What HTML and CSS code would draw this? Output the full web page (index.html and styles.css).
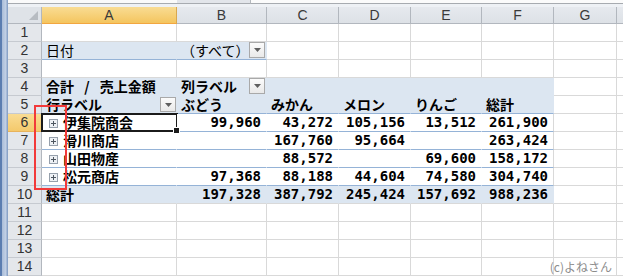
FILE: index.html
```html
<!DOCTYPE html>
<html lang="ja">
<head>
<meta charset="utf-8">
<title>ピボットテーブル</title>
<link rel="stylesheet" href="styles.css">
</head>
<body>
<div class="app">
  <div class="edge"></div>
  <div class="main">
    <div class="fbar">
      <div class="namebox"></div>
      <div class="fbtns"></div>
      <div class="finput"></div>
    </div>
    <div class="grid">
      <div class="corner"><span class="tri"></span></div>
      <div class="ch sel">A</div><div class="ch">B</div><div class="ch">C</div><div class="ch">D</div><div class="ch">E</div><div class="ch">F</div><div class="ch">G</div><div class="ch"></div>

      <div class="rh">1</div><div class="c"></div><div class="c"></div><div class="c"></div><div class="c"></div><div class="c"></div><div class="c"></div><div class="c"></div><div class="c"></div>

      <div class="rh">2</div>
      <div class="c pv bl">日付</div>
      <div class="c pv bl">（すべて）<span class="dd"><svg width="7" height="4" viewBox="0 0 7 4"><path d="M0 0H7L3.5 4Z" fill="#5f5f5f"/></svg></span></div>
      <div class="c"></div><div class="c"></div><div class="c"></div><div class="c"></div><div class="c"></div><div class="c"></div>

      <div class="rh">3</div><div class="c"></div><div class="c"></div><div class="c"></div><div class="c"></div><div class="c"></div><div class="c"></div><div class="c"></div><div class="c"></div>

      <div class="rh">4</div>
      <div class="c pv b ws">合計 / 売上金額</div>
      <div class="c pv b">列ラベル<span class="dd"><svg width="7" height="4" viewBox="0 0 7 4"><path d="M0 0H7L3.5 4Z" fill="#5f5f5f"/></svg></span></div>
      <div class="c pv"></div><div class="c pv"></div><div class="c pv"></div><div class="c pv"></div>
      <div class="c"></div><div class="c"></div>

      <div class="rh">5</div>
      <div class="c pv bl b">行ラベル<span class="dd dd-a"><svg width="7" height="4" viewBox="0 0 7 4"><path d="M0 0H7L3.5 4Z" fill="#5f5f5f"/></svg></span></div>
      <div class="c pv bl b">ぶどう</div>
      <div class="c pv bl b">みかん</div>
      <div class="c pv bl b">メロン</div>
      <div class="c pv bl b">りんご</div>
      <div class="c pv bl b">総計</div>
      <div class="c"></div><div class="c"></div>

      <div class="rh rsel">6</div>
      <div class="c wb b act"><span class="pm"><svg width="9" height="9" viewBox="0 0 9 9"><rect x="0.5" y="0.5" width="8" height="8" fill="#eef1f5" stroke="#96a0ac"/><path d="M2 4.5H7M4.5 2V7" stroke="#4d5660"/></svg></span>伊集院商会</div>
      <div class="c wb n">99,960</div>
      <div class="c wb n">43,272</div>
      <div class="c wb n">105,156</div>
      <div class="c wb n">13,512</div>
      <div class="c wb n fr">261,900</div>
      <div class="c"></div><div class="c"></div>

      <div class="rh">7</div>
      <div class="c wb b"><span class="pm"><svg width="9" height="9" viewBox="0 0 9 9"><rect x="0.5" y="0.5" width="8" height="8" fill="#eef1f5" stroke="#96a0ac"/><path d="M2 4.5H7M4.5 2V7" stroke="#4d5660"/></svg></span>滑川商店</div>
      <div class="c wb n"></div>
      <div class="c wb n">167,760</div>
      <div class="c wb n">95,664</div>
      <div class="c wb n"></div>
      <div class="c wb n fr">263,424</div>
      <div class="c"></div><div class="c"></div>

      <div class="rh">8</div>
      <div class="c wb b"><span class="pm"><svg width="9" height="9" viewBox="0 0 9 9"><rect x="0.5" y="0.5" width="8" height="8" fill="#eef1f5" stroke="#96a0ac"/><path d="M2 4.5H7M4.5 2V7" stroke="#4d5660"/></svg></span>山田物産</div>
      <div class="c wb n"></div>
      <div class="c wb n">88,572</div>
      <div class="c wb n"></div>
      <div class="c wb n">69,600</div>
      <div class="c wb n fr">158,172</div>
      <div class="c"></div><div class="c"></div>

      <div class="rh">9</div>
      <div class="c wb b"><span class="pm"><svg width="9" height="9" viewBox="0 0 9 9"><rect x="0.5" y="0.5" width="8" height="8" fill="#eef1f5" stroke="#96a0ac"/><path d="M2 4.5H7M4.5 2V7" stroke="#4d5660"/></svg></span>松元商店</div>
      <div class="c wb n">97,368</div>
      <div class="c wb n">88,188</div>
      <div class="c wb n">44,604</div>
      <div class="c wb n">74,580</div>
      <div class="c wb n fr">304,740</div>
      <div class="c"></div><div class="c"></div>

      <div class="rh">10</div>
      <div class="c pv tot b">総計</div>
      <div class="c pv tot n">197,328</div>
      <div class="c pv tot n">387,792</div>
      <div class="c pv tot n">245,424</div>
      <div class="c pv tot n">157,692</div>
      <div class="c pv tot n">988,236</div>
      <div class="c"></div><div class="c"></div>

      <div class="rh">11</div><div class="c"></div><div class="c"></div><div class="c"></div><div class="c"></div><div class="c"></div><div class="c"></div><div class="c"></div><div class="c"></div>
      <div class="rh">12</div><div class="c"></div><div class="c"></div><div class="c"></div><div class="c"></div><div class="c"></div><div class="c"></div><div class="c"></div><div class="c"></div>
      <div class="rh">13</div><div class="c"></div><div class="c"></div><div class="c"></div><div class="c"></div><div class="c"></div><div class="c"></div><div class="c"></div><div class="c"></div>
      <div class="rh">14</div><div class="c"></div><div class="c"></div><div class="c"></div><div class="c"></div><div class="c"></div><div class="c"></div><div class="c wm">(c)よねさん</div><div class="c"></div>
    </div>
  </div>
  <div class="mark"></div>
</div>
</body>
</html>
```

FILE: styles.css
```css
* { box-sizing: border-box; }
html, body {
  margin: 0;
  padding: 0;
  width: 623px;
  height: 276px;
  overflow: hidden;
  background: #fff;
}
.app {
  position: relative;
  display: flex;
  width: 623px;
  height: 276px;
  font-family: "Noto Sans CJK JP", "Liberation Sans", sans-serif;
  color: #000;
}
.edge {
  flex: 0 0 8px;
  background: linear-gradient(90deg, #5b7db0 0, #5b7db0 2px, #a9bcd8 2px, #c3d1e6 6px, #8aa3c8 7px, #8aa3c8 8px);
}
.main {
  flex: 1;
  display: flex;
  flex-direction: column;
  min-width: 0;
}
.fbar {
  height: 7px;
  display: flex;
  border-bottom: 3px solid #eef1f5;
  background: #fff;
}
.namebox { width: 169px; background: #fafafa; border-bottom: 1px solid #a7abb0; }
.fbtns { width: 73px; background: #e2e5ea; border-bottom: 1px solid #a7abb0; }
.finput { flex: 1; background: #fbfbfb; border-bottom: 1px solid #a7abb0; border-left: 1px solid #b5b9be; }

.grid {
  display: grid;
  grid-template-columns: 34px 135px 90px 72px 72px 71px 72px 63px 1fr;
  grid-template-rows: 17px repeat(14, 18px);
}
.corner {
  position: relative;
  background: #dfe3e8;
  border-right: 1px solid #b2b7be;
  border-bottom: 1px solid #b2b7be;
}
.tri {
  position: absolute;
  right: 3px;
  bottom: 3px;
  width: 0;
  height: 0;
  border-left: 9px solid transparent;
  border-bottom: 9px solid #b7bcc2;
}
.ch {
  background: linear-gradient(#e6e9ee, #dde1e6);
  border-right: 1px solid #b2b7be;
  border-bottom: 1px solid #b2b7be;
  display: flex;
  align-items: center;
  justify-content: center;
  font-family: "Liberation Sans", sans-serif;
  font-size: 14px;
  color: #3a3a3a;
  line-height: 15px;
}
.ch.sel {
  background: linear-gradient(#f9dc93, #f4c55f);
  border-bottom-color: #f2a640;
  border-right-color: #d9a84f;
}
.rh {
  background: #e4e7eb;
  border-right: 1px solid #b2b7be;
  border-bottom: 1px solid #c6cad0;
  display: flex;
  align-items: center;
  justify-content: center;
  font-family: "Liberation Sans", sans-serif;
  font-size: 14px;
  color: #333;
  line-height: 15px;
}
.rh.rsel {
  background: linear-gradient(#f9dc93, #f4c96c);
  border-right-color: #f2a640;
  border-bottom-color: #e8b35b;
}
.c {
  position: relative;
  border-right: 1px solid #d9d9d9;
  border-bottom: 1px solid #d9d9d9;
  display: flex;
  align-items: flex-end;
  padding: 0 3px 1px 4px;
  font-size: 14px;
  line-height: 15px;
  white-space: nowrap;
  overflow: visible;
}
.pv {
  background: #dce6f1;
  border-right-color: #dce6f1;
  border-bottom-color: #dce6f1;
}
.bl { border-bottom-color: #95b3d7; }
.tot { border-bottom-color: #d9d9d9; }
.wb {
  background: #fff;
  border-right-color: #fff;
  border-bottom-color: #95b3d7;
}
.fr { border-right-color: #d9d9d9; }
.b { font-weight: 700; }
.ws { word-spacing: 7px; }
.n {
  justify-content: flex-end;
  padding-right: 5px;
  font-family: "DejaVu Sans Mono", "Liberation Mono", monospace;
  font-weight: 700;
  font-size: 14px;
}
.dd {
  position: absolute;
  right: 1px;
  top: 0;
  width: 16px;
  height: 16px;
  border: 1px solid #a9a9a9;
  background: linear-gradient(#fbfbfb, #e9e9e9);
  display: flex;
  align-items: center;
  justify-content: center;
}
.dd-a { right: 0; top: 1px; height: 15px; }
.pm {
  display: flex;
  width: 9px;
  height: 9px;
  margin: 0 5px 2px 3px;
}
.act::after {
  content: "";
  position: absolute;
  left: -1px;
  top: -1px;
  right: -2px;
  bottom: -1px;
  border: 2px solid #1b1b1b;
  pointer-events: none;
}
.act::before {
  content: "";
  position: absolute;
  right: -4px;
  bottom: -3px;
  width: 5px;
  height: 5px;
  background: #1b1b1b;
  border: 1px solid #fff;
  z-index: 2;
}
.wm {
  justify-content: flex-end;
  padding-right: 4px;
  font-size: 12px;
  color: #8c8c8c;
  font-weight: 400;
}
.mark {
  position: absolute;
  left: 34px;
  top: 105px;
  width: 33px;
  height: 85px;
  border: 2px solid #f23a3a;
  pointer-events: none;
}
```
